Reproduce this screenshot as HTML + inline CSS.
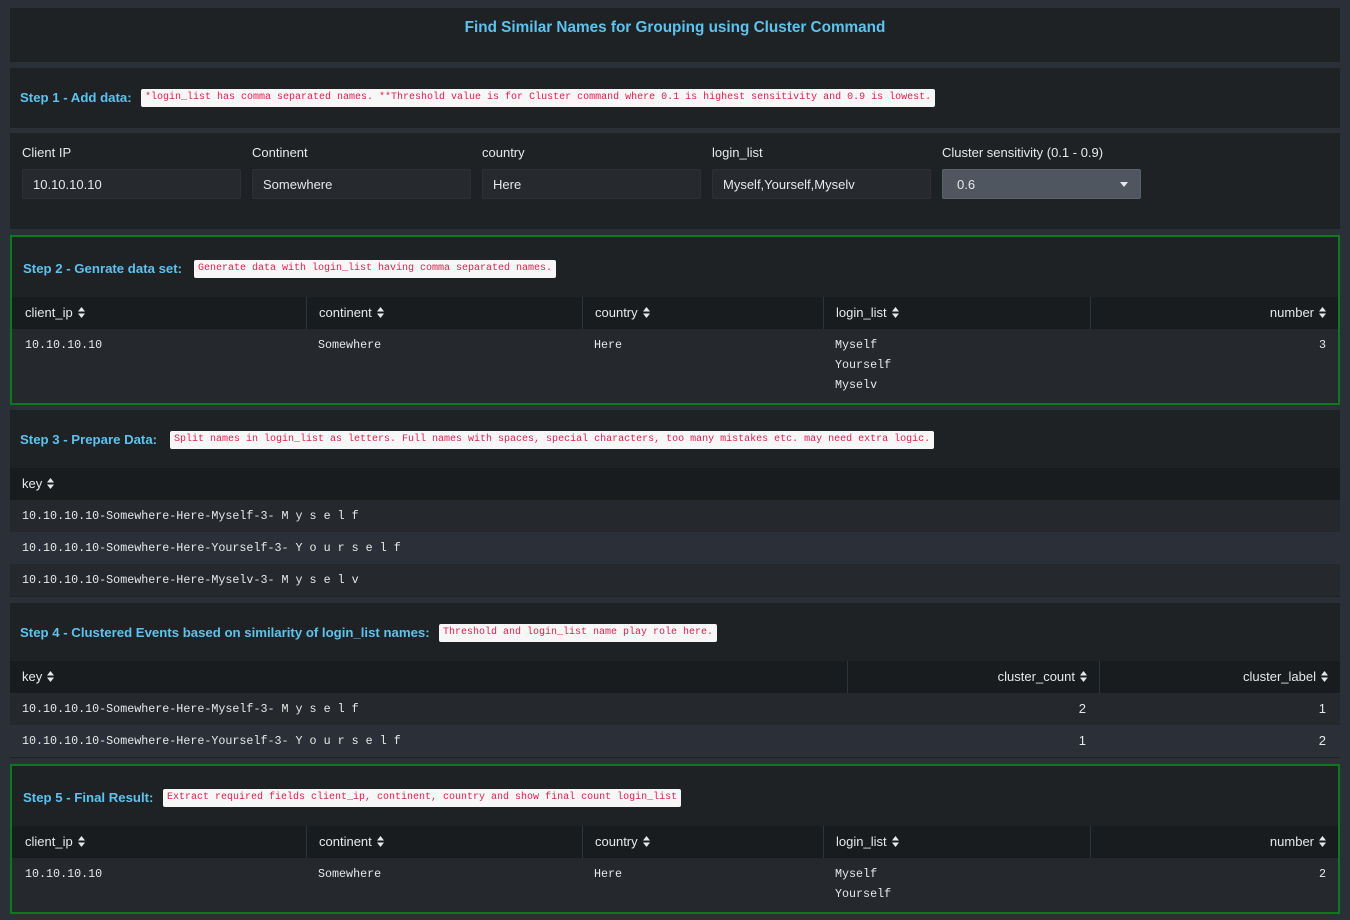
<!DOCTYPE html>
<html><head><meta charset="utf-8"><style>
*{box-sizing:border-box;margin:0;padding:0}
body{width:1350px;height:920px;background:#2b2f37;font-family:"Liberation Sans",sans-serif;color:#e6e8ea;position:relative;overflow:hidden;font-size:13px}
.p{position:absolute;left:10px;width:1330px;background:#1f2225}
.g{border:2px solid #0b7a1c}
.st{position:absolute;font-weight:bold;color:#5cc3f0;font-size:13.2px;white-space:nowrap}
.tag{position:absolute;background:#f7f7f7;color:#e0204f;font-family:"Liberation Mono",monospace;font-size:10px;padding:2px 4px;border-radius:2px;height:18px;line-height:14px;white-space:nowrap}
.hd{position:absolute;background:#191c1f;height:32px}
.r1{position:absolute;background:#25282c}
.r2{position:absolute;background:#2b2f37}
.c{position:absolute;top:0;height:32px;line-height:32px;font-size:13px;white-space:nowrap}
.s{display:inline-block;width:7px;height:11px;margin-left:5px;vertical-align:-1px;background:
 no-repeat}
.sep{position:absolute;top:0;width:1px;height:32px;background:#2f353c}
.m{font-family:"Liberation Mono",monospace;font-size:11.7px;position:absolute;white-space:pre;line-height:20px}
.lbl{position:absolute;top:12px;font-size:13px}
.in{position:absolute;top:36px;width:219px;height:30px;background:#26292d;border-radius:2px;line-height:30px;padding-left:10px;font-size:13px;border:1px solid #2c3035}
</style></head><body>
<svg width="0" height="0" style="position:absolute"><defs><g id="so"><path d="M0 4.5L3.5 0L7 4.5Z M0 6.5L3.5 11L7 6.5Z" fill="#e6e8ea"/></g></defs></svg>
<div class="p" style="top:8px;height:54px"><div class="st" style="left:0;width:1330px;text-align:center;top:11px;font-size:15.3px">Find Similar Names for Grouping using Cluster Command</div></div>

<div class="p" style="top:68px;height:60px"><div class="st" style="left:10px;top:22px">Step 1 - Add data:</div><div class="tag" style="left:131px;top:21px">*login_list has comma separated names. **Threshold value is for Cluster command where 0.1 is highest sensitivity and 0.9 is lowest.</div></div>

<div class="p" style="top:133px;height:96px">
<div class="lbl" style="left:12px">Client IP</div><div class="in" style="left:12px">10.10.10.10</div>
<div class="lbl" style="left:242px">Continent</div><div class="in" style="left:242px">Somewhere</div>
<div class="lbl" style="left:472px">country</div><div class="in" style="left:472px">Here</div>
<div class="lbl" style="left:702px">login_list</div><div class="in" style="left:702px">Myself,Yourself,Myselv</div>
<div class="lbl" style="left:932px">Cluster sensitivity (0.1 - 0.9)</div><div class="in" style="left:932px;width:199px;background:#4f5660;border-color:#5a616b;padding-left:14px">0.6<svg style="position:absolute;right:12px;top:12px" width="8" height="5"><path d="M0 0H8L4 5Z" fill="#e6e8ea"/></svg></div>
</div>

<div class="p g" style="top:235px;height:170px">
<div class="st" style="left:11px;top:24px">Step 2 - Genrate data set:</div><div class="tag" style="left:182px;top:23px">Generate data with login_list having comma separated names.</div>
<div class="hd" style="left:0;top:60px;width:1326px">
<div class="c" style="left:13px">client_ip<svg class="s"><use href="#so"/></svg></div><div class="sep" style="left:294px"></div>
<div class="c" style="left:307px">continent<svg class="s"><use href="#so"/></svg></div><div class="sep" style="left:570px"></div>
<div class="c" style="left:583px">country<svg class="s"><use href="#so"/></svg></div><div class="sep" style="left:811px"></div>
<div class="c" style="left:824px">login_list<svg class="s"><use href="#so"/></svg></div><div class="sep" style="left:1078px"></div>
<div class="c" style="right:12px">number<svg class="s"><use href="#so"/></svg></div></div>
<div class="r1" style="left:0;top:92px;width:1326px;height:74px">
<div class="m" style="left:13px;top:6px">10.10.10.10</div><div class="m" style="left:306px;top:6px">Somewhere</div><div class="m" style="left:582px;top:6px">Here</div><div class="m" style="left:823px;top:6px">Myself
Yourself
Myselv</div><div class="m" style="right:12px;top:6px">3</div></div>
</div>

<div class="p" style="top:410px;height:187px">
<div class="st" style="left:10px;top:22px">Step 3 - Prepare Data:</div><div class="tag" style="left:160px;top:21px">Split names in login_list as letters. Full names with spaces, special characters, too many mistakes etc. may need extra logic.</div>
<div class="hd" style="left:0;top:58px;width:1330px"><div class="c" style="left:12px">key<svg class="s"><use href="#so"/></svg></div></div>
<div class="r1" style="left:0;top:90px;width:1330px;height:32px"><div class="m" style="left:12px;top:6px">10.10.10.10-Somewhere-Here-Myself-3- M y s e l f</div></div>
<div class="r2" style="left:0;top:122px;width:1340px;height:32px"><div class="m" style="left:12px;top:6px">10.10.10.10-Somewhere-Here-Yourself-3- Y o u r s e l f</div></div>
<div class="r1" style="left:0;top:154px;width:1330px;height:32px"><div class="m" style="left:12px;top:6px">10.10.10.10-Somewhere-Here-Myselv-3- M y s e l v</div></div>
</div>

<div class="p" style="top:603px;height:155px">
<div class="st" style="left:10px;top:22px">Step 4 - Clustered Events based on similarity of login_list names:</div><div class="tag" style="left:429px;top:21px">Threshold and login_list name play role here.</div>
<div class="hd" style="left:0;top:58px;width:1330px"><div class="c" style="left:12px">key<svg class="s"><use href="#so"/></svg></div><div class="sep" style="left:837px"></div><div class="c" style="right:253px">cluster_count<svg class="s"><use href="#so"/></svg></div><div class="sep" style="left:1089px"></div><div class="c" style="right:12px">cluster_label<svg class="s"><use href="#so"/></svg></div></div>
<div class="r1" style="left:0;top:90px;width:1330px;height:32px"><div class="m" style="left:12px;top:6px">10.10.10.10-Somewhere-Here-Myself-3- M y s e l f</div><div class="c" style="right:254px">2</div><div class="c" style="right:14px">1</div></div>
<div class="r2" style="left:0;top:122px;width:1330px;height:32px"><div class="m" style="left:12px;top:6px">10.10.10.10-Somewhere-Here-Yourself-3- Y o u r s e l f</div><div class="c" style="right:254px">1</div><div class="c" style="right:14px">2</div></div>
</div>

<div class="p g" style="top:764px;height:150px">
<div class="st" style="left:11px;top:24px">Step 5 - Final Result:</div><div class="tag" style="left:151px;top:23px">Extract required fields client_ip, continent, country and show final count login_list</div>
<div class="hd" style="left:0;top:60px;width:1326px">
<div class="c" style="left:13px">client_ip<svg class="s"><use href="#so"/></svg></div><div class="sep" style="left:294px"></div>
<div class="c" style="left:307px">continent<svg class="s"><use href="#so"/></svg></div><div class="sep" style="left:570px"></div>
<div class="c" style="left:583px">country<svg class="s"><use href="#so"/></svg></div><div class="sep" style="left:811px"></div>
<div class="c" style="left:824px">login_list<svg class="s"><use href="#so"/></svg></div><div class="sep" style="left:1078px"></div>
<div class="c" style="right:12px">number<svg class="s"><use href="#so"/></svg></div></div>
<div class="r1" style="left:0;top:92px;width:1326px;height:54px">
<div class="m" style="left:13px;top:6px">10.10.10.10</div><div class="m" style="left:306px;top:6px">Somewhere</div><div class="m" style="left:582px;top:6px">Here</div><div class="m" style="left:823px;top:6px">Myself
Yourself</div><div class="m" style="right:12px;top:6px">2</div></div>
</div>
</body></html>
